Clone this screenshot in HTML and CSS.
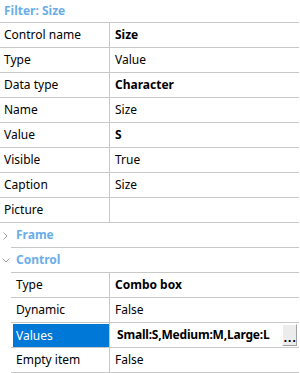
FILE: index.html
```html
<!DOCTYPE html>
<html lang="en">
<head>
  <meta charset="UTF-8">
  <title>Filter: Size</title>
  <link rel="stylesheet" href="styles.css">
</head>
<body>
<div class="panel">
  <div class="filter-title">Filter: Size</div>

  <!-- Main properties -->
  <div class="props">
    <div class="row"><div class="name">Control name</div><div class="val bold">Size</div></div>
    <div class="row"><div class="name">Type</div><div class="val">Value</div></div>
    <div class="row"><div class="name">Data type</div><div class="val bold">Character</div></div>
    <div class="row"><div class="name">Name</div><div class="val">Size</div></div>
    <div class="row"><div class="name">Value</div><div class="val bold">S</div></div>
    <div class="row"><div class="name">Visible</div><div class="val">True</div></div>
    <div class="row"><div class="name">Caption</div><div class="val">Size</div></div>
    <div class="row"><div class="name">Picture</div><div class="val"></div></div>
  </div>

  <!-- Frame group (collapsed) -->
  <div class="group-head">
    <span class="chev">
      <svg width="5" height="8" viewBox="0 0 5 8"><polyline points="0.5,0.5 4,4 0.5,7.5" fill="none" stroke="#a0a0a0" stroke-width="1"/></svg>
    </span>
    <span class="head-label">Frame</span>
  </div>

  <!-- Control group (open) -->
  <div class="group-head">
    <span class="chev">
      <svg width="8" height="5" viewBox="0 0 8 5"><polyline points="0.5,0.5 4,4 7.5,0.5" fill="none" stroke="#a0a0a0" stroke-width="1"/></svg>
    </span>
    <span class="head-label">Control</span>
  </div>
  <div class="props nested">
    <div class="row"><div class="name">Type</div><div class="val bold">Combo box</div></div>
    <div class="row"><div class="name">Dynamic</div><div class="val">False</div></div>
    <div class="row">
      <div class="name"><span class="selected">Values</span></div>
      <div class="val edit">
        <span class="edit-text bold">Small:S,Medium:M,Large:L</span>
        <button class="dots">...</button>
      </div>
    </div>
    <div class="row"><div class="name">Empty item</div><div class="val">False</div></div>
  </div>
</div>
</body>
</html>
```

FILE: styles.css
```css
body {
  margin: 0;
  background-color: #fff;
  font-family: "Noto Sans", sans-serif;
  font-size: 12px;
  color: #000;
}
.panel {
  width: 299px;
}
.filter-title {
  height: 22px;
  line-height: 22px;
  padding-left: 4px;
  font-weight: bold;
  color: #6aaee8;
  border-bottom: 1px solid #c8c8c8;
}
.row {
  display: flex;
  height: 24px;
  border-bottom: 1px solid #c8c8c8;
}
.name {
  width: 105px;
  padding-left: 4px;
  line-height: 24px;
  border-right: 1px solid #c8c8c8;
  white-space: nowrap;
}
.val {
  flex: 1;
  padding-left: 5px;
  line-height: 24px;
  white-space: nowrap;
}
.bold {
  font-weight: bold;
}
.group-head {
  display: flex;
  height: 25px;
}
.chev {
  width: 11px;
  display: flex;
  align-items: center;
  justify-content: center;
}
.head-label {
  flex: 1;
  padding-left: 5px;
  line-height: 24px;
  font-weight: bold;
  color: #6aaee8;
  border-bottom: 1px solid #c8c8c8;
}
.nested {
  margin-left: 11px;
}
.nested .name {
  width: 93px;
  padding-left: 5px;
}
.nested .name:has(.selected) {
  padding: 1px 0 0 2px;
  width: 96px;
}
.selected {
  display: block;
  height: 23px;
  line-height: 23px;
  padding-left: 3px;
  background-color: #0078d7;
  color: #fff;
}
.edit {
  display: flex;
  align-items: flex-start;
  padding: 1px 2px 0 7px;
}
.edit-text {
  flex: 1;
  line-height: 22px;
  letter-spacing: -0.2px;
}
.dots {
  width: 15px;
  height: 22px;
  margin: 0;
  padding: 0 0 1px 1px;
  display: flex;
  align-items: flex-end;
  justify-content: center;
  background-color: #ececec;
  border: 1px solid #fff;
  border-right-color: #a0a0a0;
  border-bottom-color: #a0a0a0;
  font-family: "DejaVu Sans", sans-serif;
  font-size: 10px;
  font-weight: bold;
  line-height: 10px;
  letter-spacing: 0.5px;
  color: #000;
}
```
